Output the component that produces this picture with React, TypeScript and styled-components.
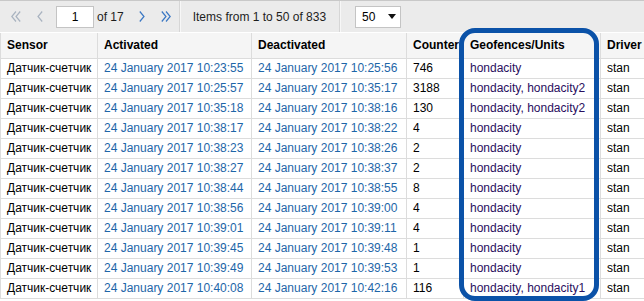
import React from "react";
import styled, { createGlobalStyle } from "styled-components";

const GlobalStyle = createGlobalStyle`
  html, body {
    margin: 0;
    padding: 0;
    background: #fff;
    overflow: hidden;
  }

  body {
    font-family: "Liberation Sans", Arial, sans-serif;
    font-size: 12px;
    color: #000;
  }
`;

interface LinkProps {
  tone?: "date" | "unit";
}

interface ArrowProps {
  disabled?: boolean;
}

const Page = styled.div`
  position: relative;
  width: 644px;
  height: 301px;
  overflow: hidden;
`;

const Pager = styled.div`
  display: flex;
  align-items: center;

  height: 31px;
  border-top: 1px solid #c8c8c8;
  border-bottom: 1px solid #fff;
  background: #ebebeb;
  padding-left: 4px;
`;

const ArrowBtn = styled.span<ArrowProps>`
  display: flex;
  align-items: center;
  justify-content: center;

  width: 24px;
  height: 22px;

  color: ${({ disabled }) => (disabled ? "#a9b3c0" : "#3b78c4")};
`;

const PageInput = styled.div`
  display: flex;
  align-items: center;
  justify-content: center;

  width: 36px;
  height: 20px;
  margin-left: 4px;
  border: 1px solid #c4c4c4;
  background: #fff;
  font-size: 12px;
`;

const PagerText = styled.span<{ gap?: number }>`
  margin-left: ${({ gap }) => gap ?? 0}px;
  margin-right: 6px;
  color: #1d1d1d;
  white-space: nowrap;
`;

const Divider = styled.span<{ left?: number; right?: number }>`
  align-self: stretch;
  width: 1px;
  margin-left: ${({ left }) => left ?? 0}px;
  margin-right: ${({ right }) => right ?? 0}px;
  background: #d6d6d6;
  border-right: 1px solid #f7f7f7;
`;

const SizeSelect = styled.div`
  display: flex;
  align-items: center;
  justify-content: space-between;

  width: 34px;
  height: 20px;
  padding: 0 4px 0 6px;
  border: 1px solid #c4c4c4;
  background: #fff;
`;

const Table = styled.table`
  width: 644px;
  border-collapse: collapse;
  table-layout: fixed;
`;

const Col = styled.col<{ w: number }>`
  width: ${({ w }) => w}px;
`;

const HeadCell = styled.th`
  box-sizing: border-box;
  height: 25px;
  padding: 0 0 0 6px;
  border: 1px solid #dcdcdc;
  border-top: none;
  background: #f5f5f5;
  font-weight: bold;
  text-align: left;
  white-space: nowrap;
  overflow: hidden;
`;

const Cell = styled.td`
  box-sizing: border-box;
  height: 20px;
  padding: 0 0 0 6px;
  border: 1px solid #dcdcdc;
  white-space: nowrap;
  overflow: hidden;
`;

const Link = styled.span<LinkProps>`
  color: ${({ tone }) => (tone === "unit" ? "#2a0f5e" : "#1d66a8")};
`;

// annotation frame drawn on top of the Geofences column
const Highlight = styled.div`
  position: absolute;
  left: 459px;
  top: 28px;
  width: 130px;
  height: 263px;
  border: 5px solid #0b52a8;
  border-radius: 16px;
  pointer-events: none;
`;

const DoubleLeft = () => (
  <svg width="10" height="11" viewBox="0 0 10 11" fill="none" stroke="currentColor" strokeWidth="1.2">
    <polyline points="5,0.5 0.8,5.5 5,10.5" />
    <polyline points="9.2,0.5 5,5.5 9.2,10.5" />
  </svg>
);

const DoubleRight = () => (
  <svg width="10" height="11" viewBox="0 0 10 11" fill="none" stroke="currentColor" strokeWidth="1.2">
    <polyline points="0.8,0.5 5,5.5 0.8,10.5" />
    <polyline points="5,0.5 9.2,5.5 5,10.5" />
  </svg>
);

const SingleLeft = () => (
  <svg width="6" height="11" viewBox="0 0 6 11" fill="none" stroke="currentColor" strokeWidth="1.2">
    <polyline points="5.2,0.5 1,5.5 5.2,10.5" />
  </svg>
);

const SingleRight = () => (
  <svg width="6" height="11" viewBox="0 0 6 11" fill="none" stroke="currentColor" strokeWidth="1.2">
    <polyline points="0.8,0.5 5,5.5 0.8,10.5" />
  </svg>
);

const Caret = () => (
  <svg width="8" height="5" viewBox="0 0 8 5">
    <polygon points="0,0 8,0 4,5" fill="#111" />
  </svg>
);

const rows: [string, string, string, string][] = [
  ["10:23:55", "10:25:56", "746", "hondacity"],
  ["10:25:57", "10:35:17", "3188", "hondacity, hondacity2"],
  ["10:35:18", "10:38:16", "130", "hondacity, hondacity2"],
  ["10:38:17", "10:38:22", "4", "hondacity"],
  ["10:38:23", "10:38:26", "2", "hondacity"],
  ["10:38:27", "10:38:37", "2", "hondacity"],
  ["10:38:44", "10:38:55", "8", "hondacity"],
  ["10:38:56", "10:39:00", "4", "hondacity"],
  ["10:39:01", "10:39:11", "4", "hondacity"],
  ["10:39:45", "10:39:48", "1", "hondacity"],
  ["10:39:49", "10:39:53", "1", "hondacity"],
  ["10:40:08", "10:42:16", "116", "hondacity, hondacity1"],
];

const columns: [string, number][] = [
  ["Sensor", 97],
  ["Activated", 154],
  ["Deactivated", 155],
  ["Counter", 57],
  ["Geofences/Units", 137],
  ["Driver", 44],
];

export default function App() {
  return (
    <Page>
      <GlobalStyle />
      <Pager>
        <ArrowBtn disabled>
          <DoubleLeft />
        </ArrowBtn>
        <ArrowBtn disabled>
          <SingleLeft />
        </ArrowBtn>
        <PageInput>1</PageInput>
        <PagerText gap={3}>of 17</PagerText>
        <ArrowBtn>
          <SingleRight />
        </ArrowBtn>
        <ArrowBtn>
          <DoubleRight />
        </ArrowBtn>
        <Divider left={1} right={12} />
        <PagerText>Items from 1 to 50 of 833</PagerText>
        <Divider left={7} right={14} />
        <SizeSelect>
          <span>50</span>
          <Caret />
        </SizeSelect>
      </Pager>
      <Table>
        <colgroup>
          {columns.map(([title, w]) => (
            <Col key={title} w={w} />
          ))}
        </colgroup>
        <thead>
          <tr>
            {columns.map(([title]) => (
              <HeadCell key={title}>{title}</HeadCell>
            ))}
          </tr>
        </thead>
        <tbody>
          {rows.map(([on, off, count, units], i) => (
            <tr key={i}>
              <Cell>Датчик-счетчик</Cell>
              <Cell>
                <Link>24 January 2017 {on}</Link>
              </Cell>
              <Cell>
                <Link>24 January 2017 {off}</Link>
              </Cell>
              <Cell>{count}</Cell>
              <Cell>
                <Link tone="unit">{units}</Link>
              </Cell>
              <Cell>stan</Cell>
            </tr>
          ))}
        </tbody>
      </Table>
      <Highlight />
    </Page>
  );
}
